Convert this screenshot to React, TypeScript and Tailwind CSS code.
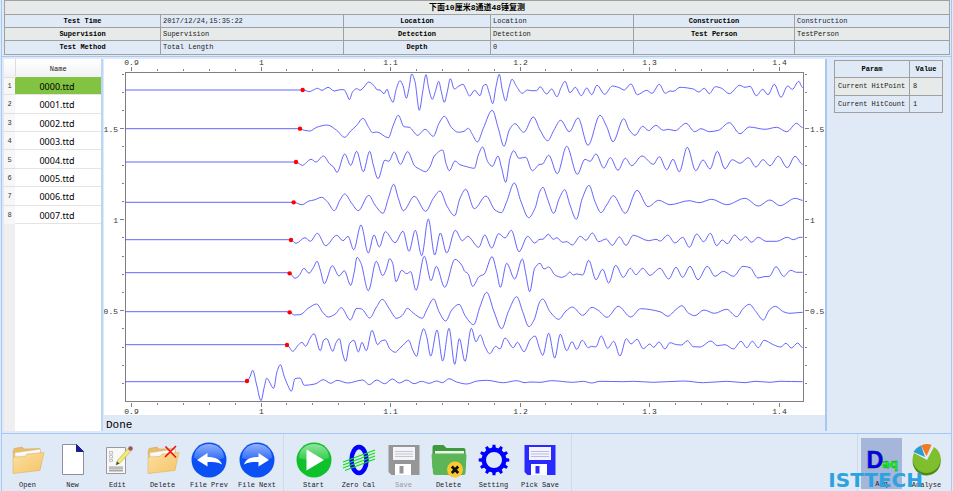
import React from 'react';

type Point = [number, number];

interface Trace {
  top: number;
  hit: Point;
  base: number;
  left: string;
  right: string;
}

/* Peaks and troughs of every channel, in thirds of a chart unit. */
const traces: Trace[] = [
  {
    top: -4, hit: [188, 105], base: 105,
    left: '188,105 198,107 207,110 220,105 232,100 246,106 264,97 283,108 300,104 312,104 320,117 328,134 338,110 350,101 360,106 372,96 386,81 402,92 411,104 420,105 432,116 441,103 449,125 459,142 468,105 480,77 489,92 499,130 507,100 515,57 525,80 538,166 548,110 558,59 566,100 577,133 586,110 596,79 604,110 613,142 622,110 631,71 643,102 657,93 669,88 678,103 689,123 704,106 720,122 730,92 738,88 748,115 758,146 768,95 778,58 787,105 797,138 807,98 816,73 830,95 847,115 862,105 875,107 890,107',
    right: '0,95 20,117 35,102 51,125 63,98 75,79 90,113 106,97 124,122 140,99 155,119 171,91 194,118 217,93 240,99 252,105 273,87 292,119 320,106 336,115 358,88 376,115 390,108 400,109 420,97 460,102 476,111 493,100 508,116 526,95 545,100 568,116 599,91 615,97 630,94 649,122 668,103 684,119 703,88 723,127 743,93 757,103 776,79 788,98',
  },
  {
    top: -4, hit: [180, 221], base: 221,
    left: '180,221 193,226 210,228 230,217 262,210 290,226 314,247 332,228 350,211 369,190 385,215 398,233 410,231 445,248 460,210 475,181 492,215 508,217 533,241 555,223 580,244 597,205 613,184 635,218 655,232 672,229 685,220 697,238 712,261 730,220 757,166 775,220 792,274 808,225 825,206 851,232 880,186',
    right: '0,225 23,257 42,225 62,196 88,230 114,189 144,271 180,181 200,215 219,260 251,191 268,225 285,241 308,214 326,227 347,211 370,226 385,223 405,227 438,205 464,230 483,221 508,230 535,226 568,203 600,236 628,216 675,223 710,217 740,230 770,205 788,218',
  },
  {
    top: -4, hit: [168, 321], base: 321,
    left: '168,321 187,331 213,313 228,321 250,303 270,328 280,335 291,352 314,297 332,331 350,289 370,350 389,289 400,330 414,371 435,315 446,319 463,291 481,328 503,290 524,333 538,342 557,350 570,335 583,303 608,285 618,325 628,347 645,318 660,329 680,335 703,340 715,300 728,276 743,320 757,334 774,303 785,340 797,382 810,310 821,287 837,310 857,307 877,347',
    right: '0,328 6,328 26,301 52,356 80,274 112,358 135,313 150,319 168,297 191,339 211,308 234,346 256,310 275,332 306,303 340,328 358,305 380,344 399,313 418,350 442,277 467,347 489,315 510,342 532,289 555,341 577,314 600,325 625,308 648,336 669,314 690,332 715,304 742,338 765,304 788,328',
  },
  {
    top: -4, hit: [161, 442], base: 442,
    left: '161,442 186,449 207,438 222,435 245,427 262,440 283,467 300,435 314,417 335,445 355,467 386,421 405,450 429,475 445,430 461,388 475,430 490,467 523,424 557,469 580,430 600,408 622,455 644,482 660,430 677,403 703,461 738,423 765,465 784,473 800,440 823,384 843,440 866,488 885,460',
    right: '0,408 9,397 22,430 41,475 58,430 74,404 90,450 109,493 127,430 147,391 165,440 183,473 200,450 220,422 256,475 291,406 324,455 356,436 390,449 447,437 477,443 515,433 560,449 615,430 655,453 690,435 720,452 766,430 788,436',
  },
  {
    top: 166, hit: [153, 45], base: 44,
    left: '153,45 168,55 195,38 211,49 232,25 257,62 290,31 309,47 324,34 341,74 363,0 385,84 402,30 418,66 436,20 465,53 489,19 507,79 526,16 545,92 565,-18 584,90 601,24 620,84 646,16 667,47 683,34 716,67 734,30 755,69 776,26 795,39 814,16 837,80 863,34 884,54',
    right: '0,43 8,43 25,28 40,43 50,38 68,52 80,50 97,60 121,34 138,46 157,24 176,50 198,42 217,61 238,36 258,61 280,31 326,47 348,43 361,48 383,30 405,54 428,37 448,67 470,27 491,50 511,25 530,62 547,45 562,56 584,30 602,46 617,35 634,52 655,37 678,49 710,49 742,37 760,44 780,37 788,37',
  },
  {
    top: 166, hit: [149, 145], base: 143,
    left: '149,145 165,160 177,152 192,130 207,145 220,128 231,109 241,135 253,176 277,122 297,153 313,137 332,181 343,140 351,97 363,115 385,197 409,109 428,152 438,135 449,101 458,115 468,170 485,136 500,146 512,140 528,196 553,94 573,167 589,124 614,187 645,103 665,120 674,139 684,146 698,184 717,155 733,147 756,95 770,140 781,187 800,115 824,162 847,102 858,150 869,200 884,130',
    right: '0,115 12,132 26,126 45,150 65,157 80,150 89,141 100,150 110,147 128,150 146,106 168,164 188,133 206,174 227,121 250,157 271,130 288,149 308,130 330,151 360,130 386,162 408,127 428,157 450,124 474,164 502,124 525,154 550,139 580,154 609,124 630,128 654,159 672,155 688,154 708,125 731,154 752,136 770,142 788,142',
  },
  {
    top: 166, hit: [149, 262], base: 260,
    left: '149,262 163,270 180,269 207,248 230,237 248,262 265,276 285,268 304,248 331,285 350,250 365,252 389,279 410,245 427,223 447,250 470,280 488,270 502,250 520,264 547,280 560,255 581,222 597,260 617,288 635,255 657,238 677,275 701,299 720,245 740,202 762,260 785,311 805,260 830,215 848,260 867,305 882,285',
    right: '0,229 8,222 30,260 56,283 78,258 97,246 128,271 156,247 175,256 201,277 235,244 272,276 302,251 360,260 384,274 405,256 426,242 445,264 464,272 492,255 523,265 560,253 590,275 610,250 628,238 648,260 670,285 688,255 706,244 730,260 750,265 788,262',
  },
  {
    top: 166, hit: [141, 360], base: 359,
    left: '141,360 158,379 175,360 186,352 197,364 210,340 222,326 241,377 251,345 260,341 278,379 288,353 298,341 309,390 317,409 329,355 342,346 355,381 366,352 379,377 396,316 413,359 422,349 435,345 450,372 466,382 478,371 490,360 506,346 518,375 530,394 540,345 551,311 560,335 572,393 591,315 608,408 627,310 644,418 658,341 675,409 694,310 708,350 721,330 735,365 749,386 767,364 780,372 795,339 820,368 832,352 852,380 870,345 885,333',
    right: '0,375 8,391 26,325 44,399 61,328 80,377 96,350 110,373 127,346 145,368 154,364 167,366 184,333 203,370 221,349 240,393 259,341 273,357 291,343 310,371 329,357 341,367 357,351 375,372 390,353 410,359 425,360 442,347 460,365 480,366 513,348 532,362 555,359 580,372 603,349 620,368 637,349 655,368 672,346 700,359 722,366 738,355 754,369 773,354 788,368',
  },
  {
    top: 166, hit: [21, 468], base: 470,
    left: '20,469 30,455 38,436 50,480 63,527 72,490 80,460 101,490 111,440 121,419 133,455 144,482 154,499 165,461 180,459 193,481 225,477 250,464 272,475 291,466 323,474 368,465 388,479 410,465 434,476 457,462 478,474 500,465 522,476 545,469 567,475 590,468 607,473 627,461 650,471 680,477 712,468 740,466 790,473 830,467 855,473 870,471',
    right: '0,472 35,467 100,472 130,469 155,474 180,469 250,470 280,469 340,472 430,468 490,473 560,469 615,473 645,469 690,472 720,469 788,470',
  },
];

const parse = (text: string, shift: number): Point[] =>
  text.split(' ').map((pair) => {
    const [x, y] = pair.split(',').map(Number);
    return [x + shift, y];
  });

/* Smooth curve that is flat at every peak and trough. */
function tracePath(trace: Trace): string {
  const pts: Point[] = [...parse(trace.left, 0), ...parse(trace.right, 900)];
  const place = (x: number, y: number) =>
    `${(x / 3 + 136).toFixed(1)} ${(y / 3 + trace.top).toFixed(1)}`;
  const slope = pts.map((p, i) => {
    if (i === 0 || i === pts.length - 1) return 0;
    const a = (p[1] - pts[i - 1][1]) / (p[0] - pts[i - 1][0]);
    const b = (pts[i + 1][1] - p[1]) / (pts[i + 1][0] - p[0]);
    return a * b <= 0 ? 0 : (2 * a * b) / (a + b);
  });
  let d = `M${place(-344, trace.base)}L${place(pts[0][0] - 4, trace.base)}L${place(pts[0][0], pts[0][1])}`;
  for (let i = 1; i < pts.length; i++) {
    const [x0, y0] = pts[i - 1];
    const [x1, y1] = pts[i];
    const h = (x1 - x0) / 3;
    d += `C${place(x0 + h, y0 + slope[i - 1] * h)} ${place(x1 - h, y1 - slope[i] * h)} ${place(x1, y1)}`;
  }
  return d;
}

const xTicks = Array.from({ length: 27 }, (_, i) => ({
  x: Math.round(27 + i * 25.9) + 0.5,
  label: i % 5 === 0 ? ['0.9', '1', '1.1', '1.2', '1.3', '1.4'][i / 5] : '',
})).filter((t) => t.x < 699);

const yTicks = Array.from({ length: 18 }, (_, i) => ({
  y: Math.round(14.5 + i * 18.2) + 0.5,
  label: ({ 3: '1.5', 8: '1', 13: '0.5' } as Record<number, string>)[i] ?? '',
}));

function Chart() {
  return (
    <svg viewBox="0 0 721 356" className="block h-auto w-full bg-white" role="img" aria-label="Channel wave forms">
      <g stroke="#808080" fill="none" shapeRendering="crispEdges">
        <rect x="21.5" y="13.5" width="678" height="329" />
        {xTicks.map((t) => (
          <path key={t.x} d={t.label ? `M${t.x} 8v4M${t.x} 344v4` : `M${t.x} 10v2M${t.x} 344v2`} />
        ))}
        {yTicks.map((t) => (
          <path key={t.y} d={t.label ? `M16 ${t.y}h4M701 ${t.y}h4` : `M18 ${t.y}h2M701 ${t.y}h2`} />
        ))}
      </g>
      <g fill="#333" className="font-['Liberation_Mono',monospace] text-[8px]">
        {xTicks.filter((t) => t.label).map((t) => (
          <g key={t.x} textAnchor="middle">
            <text x={t.x} y="6">{t.label}</text>
            <text x={t.x} y="355">{t.label}</text>
          </g>
        ))}
        {yTicks.filter((t) => t.label).map((t) => (
          <g key={t.y}>
            <text x="14" y={t.y + 3} textAnchor="end">{t.label}</text>
            <text x="706" y={t.y + 3}>{t.label}</text>
          </g>
        ))}
      </g>
      {traces.map((t, i) => (
        <path key={i} d={tracePath(t)} fill="none" stroke="#3c3cff" strokeWidth="0.8" />
      ))}
      {traces.map((t, i) => (
        <circle key={i} cx={t.hit[0] / 3 + 136} cy={t.hit[1] / 3 + t.top} r="2.2" fill="#f00" />
      ))}
    </svg>
  );
}

const infoRows = [
  ['Test Time', '2017/12/24,15:35:22', 'Location', 'Location', 'Construction', 'Construction'],
  ['Supervision', 'Supervision', 'Detection', 'Detection', 'Test Person', 'TestPerson'],
  ['Test Method', 'Total Length', 'Depth', '0', '', ''],
];

function InfoTable() {
  return (
    <table className="w-full table-fixed border-collapse text-[7px] leading-[9px] text-[#222]">
      <colgroup>
        <col className="w-[156px]" />
        <col className="w-[183px]" />
        <col className="w-[147px]" />
        <col className="w-[143px]" />
        <col className="w-[161px]" />
        <col className="w-[155px]" />
      </colgroup>
      <thead>
        <tr className="h-[14px] bg-[#e6eae8]">
          <th colSpan={6} className="border border-[#a0a0a0] p-0 text-[8px] font-bold text-black">
            下面10厘米8通道48锤复测
          </th>
        </tr>
      </thead>
      <tbody>
        {infoRows.map((row) => (
          <tr key={row[0]} className="h-[13px] even:bg-[#e6eae8] last:h-[14px]">
            {row.map((cell, i) =>
              i % 2 === 0 ? (
                <th key={i} className="border border-[#a0a0a0] p-0 font-bold text-black">{cell}</th>
              ) : (
                <td key={i} className="border border-[#a0a0a0] px-0.5 py-0">{cell}</td>
              ),
            )}
          </tr>
        ))}
      </tbody>
    </table>
  );
}

const files = ['0000.ttd', '0001.ttd', '0002.ttd', '0003.ttd', '0004.ttd', '0005.ttd', '0006.ttd', '0007.ttd'];

function FileList() {
  return (
    <div className="w-[97px] shrink-0 bg-[linear-gradient(to_right,#efefef_11px,#fff_11px)]">
      <table className="h-[165px] w-full table-fixed border-collapse">
        <thead>
          <tr className="h-[18px] bg-[linear-gradient(#fff,#f1f2f4)] text-[7px] leading-[9px] text-[#222]">
            <th className="w-[11px] border-r border-[#dcdcdc] p-0" />
            <th className="p-0 pt-0.5 font-normal">Name</th>
          </tr>
        </thead>
        <tbody>
          {files.map((name, i) => (
            <tr key={name} className="group">
              <th className="border-t border-[#e0e0e0] bg-[#f7f7f8] p-0 pt-0.5 text-[7px] leading-[9px] font-normal text-[#333]">{i + 1}</th>
              <td className="border-b border-[#e4e4e4] bg-white p-0 pt-0.5 group-first:bg-[#82c341]">
                <button type="button" className="block w-full pr-0.5 text-center font-['Noto_Sans',sans-serif] text-[9px] leading-[13px] text-black">
                  {name}
                </button>
              </td>
            </tr>
          ))}
        </tbody>
      </table>
    </div>
  );
}

function ParamTable() {
  return (
    <table className="w-[109px] table-fixed border-collapse text-[7px] leading-[9px] text-[#222]">
      <thead>
        <tr className="h-[17px]">
          <th className="w-[75px] border border-[#a0a0a0] p-0 font-bold text-black">Param</th>
          <th className="border border-[#a0a0a0] p-0 font-bold text-black">Value</th>
        </tr>
      </thead>
      <tbody>
        <tr className="h-[18px] bg-[#e6eae8]">
          <td className="border border-[#a0a0a0] px-[3px] py-0 whitespace-nowrap">Current HitPoint</td>
          <td className="border border-[#a0a0a0] px-[3px] py-0">8</td>
        </tr>
        <tr className="h-[17px]">
          <td className="border border-[#a0a0a0] px-[3px] py-0 whitespace-nowrap">Current HitCount</td>
          <td className="border border-[#a0a0a0] px-[3px] py-0">1</td>
        </tr>
      </tbody>
    </table>
  );
}

function Icon({ children }: { children: React.ReactNode }) {
  return (
    <svg viewBox="0 0 36 36" className="block size-[36px]" aria-hidden="true">
      {children}
    </svg>
  );
}

function Folder() {
  return (
    <>
      <path d="M3 10l1-3.500 8-1.500 2 2 16-.5.500 3v16L5 31z" fill="#e9bd68" stroke="#d0a353" strokeWidth=".5" />
      <path d="M5 11l25-3.500v15L6 29z" fill="#fdfdfd" stroke="#ddd" strokeWidth=".5" />
      <path d="M6 13l24-3v12L7 29z" fill="#f4f4f4" />
      <path d="M3 31.500L3 15l12-.5 2-2.500 17-1.500-4 18z" fill="url(#folder)" stroke="#dcaa55" strokeWidth=".5" />
    </>
  );
}

const openIcon = <Icon><Folder /></Icon>;

const newIcon = (
  <Icon>
    <path d="M7.500 2.500h14l7 7v23h-21z" fill="#fff" stroke="#8e8ea0" />
    <path d="M21.500 2.500v7h7z" fill="#1c1c94" stroke="#1c1c94" />
  </Icon>
);

const editIcon = (
  <Icon>
    <path d="M6.500 5.500h19v26h-19z" fill="#f8f8f8" stroke="#999" />
    <path d="M9.500 9.500h3v2.500h-3zM9.500 13.500h3v2.500h-3zM9.500 17.500h3v2h-3z" fill="none" stroke="#aaa" strokeWidth=".7" />
    <path d="M9 24h14v6H9z" fill="#cfcfcf" />
    <path d="M9 26h14M9 28.500h14" stroke="#999" strokeWidth=".7" />
    <path d="M16 23l1-4L28.500 6l3 2.500L20 21z" fill="#f2ea72" stroke="#b5ac4a" strokeWidth=".6" />
    <path d="M16 23l1-3.500 2.500 2z" fill="#444" />
    <circle cx="30.500" cy="6.500" r="2.300" fill="#99586a" />
  </Icon>
);

const deleteFileIcon = (
  <Icon>
    <Folder />
    <path d="M20.500 4.500l10.500 11M31 4L20 15" stroke="#f01010" strokeWidth="1.600" fill="none" />
  </Icon>
);

function Ball({ fill }: { fill: string }) {
  return (
    <>
      <circle cx="18" cy="18" r="17.500" fill={fill} />
      <path d="M3 16C3 7 10 2 18 2s15 5 15 14c-8 3-22 3-30 0z" fill="url(#gloss)" />
    </>
  );
}

const prevIcon = (
  <Icon>
    <Ball fill="#0a50f5" />
    <path d="M6 18L16.500 11v4c8 0 12.500 2 14.500 7.500-4-2.500-9-2.500-14.500-2.500v4.500z" fill="#fff" />
  </Icon>
);

const nextIcon = (
  <Icon>
    <Ball fill="#0a50f5" />
    <path d="M30 18L19.500 11v4c-8 0-12.500 2-14.500 7.500 4-2.500 9-2.500 14.500-2.500v4.500z" fill="#fff" />
  </Icon>
);

const startIcon = (
  <Icon>
    <Ball fill="#0fc22c" />
    <path d="M10.500 7.500v21L28 18z" fill="#fff" />
  </Icon>
);

const zeroIcon = (
  <Icon>
    <ellipse cx="18" cy="18" rx="7.500" ry="13" fill="none" stroke="#00f" strokeWidth="4.500" />
    <path d="M2 20L34 8M2 23L34 11M2 26L34 14M4 28.500l30-11.500" stroke="#10e010" strokeWidth="1.300" />
  </Icon>
);

function Disk({ body, line }: { body: string; line: string }) {
  return (
    <Icon>
      <path d="M2.500 3h31v30H5.500L2.500 30z" fill={body} />
      <path d="M7 5h22v13H7z" fill="#f3f3fb" />
      <path d="M9 9.500h18M9 12h18M9 14.500h18" stroke={line} strokeWidth=".8" />
      <path d="M9 22h16v11H9z" fill="#fff" />
      <path d="M13.500 24h4v7.500h-4z" fill={body} />
    </Icon>
  );
}

const deleteIcon = (
  <Icon>
    <path d="M1.500 5q0-2 2-2h9l3 3h17q2 0 2 2v18H1.500z" fill="#3f9a3f" />
    <path d="M4 9h29v5H4z" fill="#e9f5e9" />
    <path d="M.5 13q0-1.500 2-1.500h31q2 0 2 2L34.500 31q0 2-2 2H4q-2 0-2-2z" fill="#5cb556" />
    <circle cx="24" cy="27.500" r="8" fill="#fbc92d" />
    <path d="M20.800 24.500l6.400 6.500M27.200 24.500l-6.400 6.500" stroke="#111" strokeWidth="2.800" />
  </Icon>
);

const teeth = Array.from({ length: 12 }, (_, i) => i * 30);

const settingIcon = (
  <Icon>
    <circle cx="18" cy="18" r="10.200" fill="none" stroke="#00f" strokeWidth="4.400" />
    {teeth.map((angle) => (
      <path key={angle} d="M16 7l.6-4.300h2.800l.6 4.300z" fill="#00f" transform={`rotate(${angle} 18 18)`} />
    ))}
  </Icon>
);

const acqIcon = (
  <Icon>
    <g className="font-bold">
      <text x="2" y="27" fill="#00f" stroke="#124" strokeWidth=".5" className="font-['Liberation_Sans',sans-serif] text-[24px]">D</text>
      <text x="18" y="27" fill="#0f0" stroke="#164" strokeWidth=".3" className="font-['DejaVu_Sans',sans-serif] text-[12px]">aq</text>
    </g>
  </Icon>
);

const analyseIcon = (
  <Icon>
    <path d="M18 20L5 12A14 14 0 1 0 25 6z" fill="#4c8a12" transform="translate(0 1.500)" />
    <path d="M18 18L5 11A14 14 0 1 0 25 5z" fill="#7fbe2c" />
    <path d="M16 15L4.500 10Q7 5.500 12 3.500z" fill="#2b9bd0" />
    <path d="M17.500 14L12 3.500Q18 1 22.500 3z" fill="#f47a20" />
  </Icon>
);

interface ToolProps {
  icon: React.ReactNode;
  label: string;
  wide?: boolean;
  disabled?: boolean;
}

function Tool({ icon, label, wide = false, disabled = false }: ToolProps) {
  return (
    <button
      type="button"
      disabled={disabled}
      className={`flex flex-col items-center gap-[3px] pt-2 text-[7px] leading-[9px] whitespace-nowrap text-[#222] disabled:text-[#999] ${wide ? 'w-[48px]' : 'w-[45px]'}`}
    >
      {icon}
      {label}
    </button>
  );
}

function Toolbar() {
  return (
    <div className="flex h-[57px] pl-[3px]">
      <Tool icon={openIcon} label="Open" />
      <Tool icon={newIcon} label="New" />
      <Tool icon={editIcon} label="Edit" />
      <Tool icon={deleteFileIcon} label="Delete" />
      <Tool icon={prevIcon} label="File Prev" wide />
      <Tool icon={nextIcon} label="File Next" wide />
      <div className="mr-[7px] ml-0.5 w-px bg-[#cfdae8]" />
      <Tool icon={startIcon} label="Start" />
      <Tool icon={zeroIcon} label="Zero Cal" />
      <Tool icon={<Disk body="#969696" line="#bbb" />} label="Save" disabled />
      <Tool icon={deleteIcon} label="Delete" />
      <Tool icon={settingIcon} label="Setting" />
      <Tool icon={<Disk body="#2a2aff" line="#a9a9f0" />} label="Pick Save" wide />
      <div className="ml-[7px] w-px bg-[#cfdae8]" />
      <div className="relative ml-auto flex border-l border-[#cfdae8] pl-[3px]">
        <button
          type="button"
          className="mt-1 mb-0.5 flex w-[41px] flex-col items-center gap-[3px] bg-[#a5b6da] pt-1 text-[7px] leading-[9px] text-[#222]"
        >
          {acqIcon}
          Acq
        </button>
        <button type="button" className="flex w-[49px] flex-col items-center gap-[3px] pt-2 text-[7px] leading-[9px] text-[#222]">
          {analyseIcon}
          Analyse
        </button>
        <span className="pointer-events-none absolute right-[28px] bottom-0.5 font-['DejaVu_Sans',sans-serif] text-[20px] leading-[18px] font-bold text-[#2ba3e0]">
          ISTTECH
        </span>
      </div>
    </div>
  );
}

export default function App() {
  return (
    <div className="min-h-screen bg-[#e0eaf6] px-px font-['Liberation_Mono','Noto_Sans_CJK_SC',monospace]">
      <svg width="0" height="0" className="absolute" aria-hidden="true">
        <defs>
          <linearGradient id="folder" x1="0" y1="0" x2="1" y2="1">
            <stop offset="0" stopColor="#fde0a0" />
            <stop offset="1" stopColor="#f3c469" />
          </linearGradient>
          <linearGradient id="gloss" x1="0" y1="0" x2="0" y2="1">
            <stop offset="0" stopColor="#fff" stopOpacity=".55" />
            <stop offset="1" stopColor="#fff" stopOpacity=".15" />
          </linearGradient>
        </defs>
      </svg>
      <div className="min-h-screen border-x border-[#a5c8f5]">
        <header className="border-b border-[#a5c8f5] px-0.5 pb-px">
          <InfoTable />
        </header>
        <main className="flex border-b border-[#a5c8f5] pt-0.5 pb-0.5 pl-0.5">
          <FileList />
          <div className="mr-px w-0.5 shrink-0 bg-[#bcd6f5]" />
          <section className="min-w-0 flex-1">
            <Chart />
            <p className="h-[16px] pt-0.5 pl-0.5 text-[11px] leading-[16px] text-black">Done</p>
          </section>
          <div className="w-0.5 shrink-0 bg-[#a5c8f5]" />
          <aside className="w-[124px] shrink-0 pt-px pl-[7px]">
            <ParamTable />
          </aside>
        </main>
        <Toolbar />
      </div>
    </div>
  );
}
